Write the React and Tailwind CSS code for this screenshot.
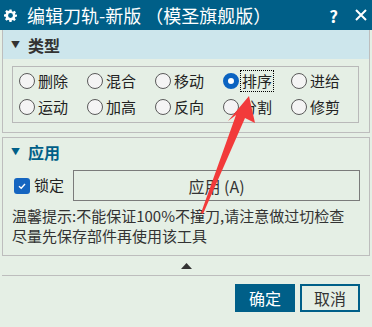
import React from 'react'

const row1 = ['删除', '混合', '移动', '排序', '进给']
const row2 = ['运动', '加高', '反向', '分割', '修剪']

function Radio({ label, checked }) {
  return (
    <div className="flex items-center h-[26px]">
      <span
        className={
          checked
            ? 'w-4 h-4 rounded-full border-[5px] border-[#0b63c1] bg-white shrink-0'
            : 'w-4 h-4 rounded-full border border-[#5a5a5a] bg-[#f4f4f4] shrink-0'
        }
      />
      <span
        className={
          checked
            ? 'ml-[2px] px-[1px] leading-[20px] text-[15px] text-[#222] outline outline-1 outline-dotted outline-black'
            : 'ml-[3px] leading-[20px] text-[15px] text-[#222]'
        }
      >
        {label}
      </span>
    </div>
  )
}

export default function App() {
  return (
    <div
      className="relative w-[372px] h-[327px] overflow-hidden bg-[#e5efe5]"
      style={{ fontFamily: '"Noto Sans CJK SC", "Noto Sans", sans-serif' }}
    >
      {/* Title bar */}
      <div className="h-[30px] bg-[#005f88] flex items-center text-white">
        <svg className="ml-[4px] w-[13px] h-[13px]" viewBox="0 0 24 24" fill="white">
          <path d="M10 1h4l.6 3.2 2 .9 2.7-1.9 2.8 2.8-1.9 2.7.9 2L24 10v4l-3.2.6-.9 2 1.9 2.7-2.8 2.8-2.7-1.9-2 .9L14 24h-4l-.6-3.2-2-.9-2.7 1.9-2.8-2.8 1.9-2.7-.9-2L0 14v-4l3.2-.6.9-2L2.2 4.7 5 1.9l2.7 1.9 2-.9Z M12 7.5a4.5 4.5 0 1 0 0 9a4.5 4.5 0 1 0 0-9Z" fillRule="evenodd" />
        </svg>
        <span className="ml-[10px] text-[18px] leading-none">编辑刀轨-新版 （模圣旗舰版）</span>
        <span className="ml-auto text-[17px] font-bold leading-none">?</span>
        <svg className="ml-[17px] mr-[5px] w-[12px] h-[12px]" viewBox="0 0 12 12" stroke="white" strokeWidth="2">
          <path d="M1 1L11 11M11 1L1 11" />
        </svg>
      </div>

      {/* Section: 类型 */}
      <div className="mx-[2px] border border-t-0 border-[#bdbdbd]">
        <div className="h-[29px] bg-[#cde6ec] flex items-center">
          <span className="ml-[8px] text-[9px] text-[#333]">▼</span>
          <span className="ml-[8px] text-[16px] font-semibold text-[#333]">类型</span>
        </div>
        <div className="pt-[7px] pb-[9px] pl-[9px]">
          <div className="w-[347px] border border-[#b9b9b9] pt-[1px] pb-[2px] pl-[6px]">
            <div className="grid grid-cols-[68px_68px_68px_68px_68px]">
              {row1.map((l) => (
                <Radio key={l} label={l} checked={l === '排序'} />
              ))}
              {row2.map((l) => (
                <Radio key={l} label={l} />
              ))}
            </div>
          </div>
        </div>
      </div>

      {/* Section: 应用 */}
      <div className="mx-[2px] mt-[4px] border border-[#bdbdbd]">
        <div className="h-[27px] flex items-center">
          <span className="ml-[8px] text-[9px] text-[#005f88]">▼</span>
          <span className="ml-[8px] text-[16px] font-bold text-[#005f88]">应用</span>
        </div>
        <div className="flex items-center mt-[5px] pl-[11px]">
          <span className="w-4 h-4 rounded-[3px] bg-[#1565c0] flex items-center justify-center">
            <svg className="w-[10px] h-[10px]" viewBox="0 0 10 10" fill="none" stroke="white" strokeWidth="1.4">
              <path d="M2 5.2L4.2 7.2L8 3" />
            </svg>
          </span>
          <span className="ml-[4px] text-[15px] text-[#222]">锁定</span>
          <div className="ml-[9px] w-[287px] h-[31px] border border-[#7b7b7b] flex items-center justify-center text-[16px] text-[#333]">
            应用 (A)
          </div>
        </div>
        <div className="mt-[5px] pl-[9px] pb-[9px] text-[15px] leading-[20px] text-[#333]">
          <div>温馨提示:不能保证100%不撞刀,请注意做过切检查</div>
          <div>尽量先保存部件再使用该工具</div>
        </div>
      </div>

      {/* Collapse toggle */}
      <div className="h-[19px] flex items-center justify-center">
        <svg className="w-[11px] h-[6px]" viewBox="0 0 11 6" fill="#333">
          <path d="M5.5 0L11 6H0Z" />
        </svg>
      </div>
      <div className="mx-[2px] h-[1px] bg-[#bdbdbd]" />

      {/* Buttons */}
      <div className="flex justify-end gap-[5px] pr-[12px] mt-[8px]">
        <div className="w-[60px] h-[28px] bg-[#005f88] text-white text-[16px] flex items-center justify-center">确定</div>
        <div className="w-[60px] h-[28px] border-2 border-[#005f88] text-[#333] text-[16px] flex items-center justify-center">取消</div>
      </div>

      {/* Red annotation arrow */}
      <svg className="absolute left-0 top-0 pointer-events-none" width="372" height="327" viewBox="0 0 372 327">
        <path d="M249 96 L255 123 L245 118 L203 214 L201 213 L236 115 L228 121 Z" fill="#f23a3a" />
      </svg>
    </div>
  )
}
